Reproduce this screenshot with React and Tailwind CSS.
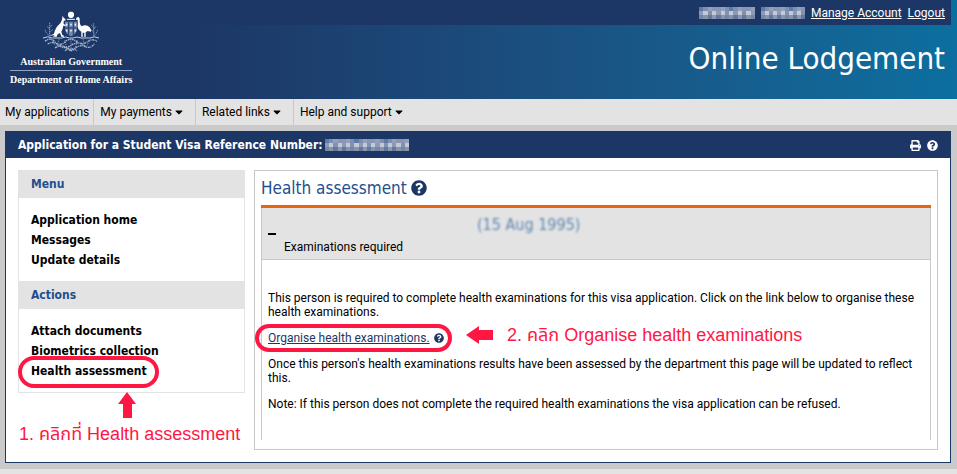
import { FaCaretDown, FaQuestionCircle, FaPrint } from 'react-icons/fa';

const navItems = [
  { label: 'My applications', caret: false },
  { label: 'My payments', caret: true },
  { label: 'Related links', caret: true },
  { label: 'Help and support', caret: true },
];

const sideGroups = [
  { title: 'Menu', items: ['Application home', 'Messages', 'Update details'] },
  { title: 'Actions', items: ['Attach documents', 'Biometrics collection', 'Health assessment'] },
];

// one list of shades per row, the middle row is the brightest
const shades = [
  ['#5f7aa4', '#7f8fb0', '#8a96b4', '#7485a6', '#94a0b8', '#8b93b3', '#a0a3b8'],
  ['#8fa3be', '#a9b4c6', '#8b9ab8', '#c3c9d6', '#9aa2bb', '#b5b0c2', '#7f93b1', '#9fb3bf'],
  ['#6b7da3', '#8a97b5', '#65799f', '#8f9bb5', '#7686a8', '#8795a6'],
];

function Mosaic({ cols, className }) {
  return (
    <svg viewBox={`0 0 ${cols} 3`} preserveAspectRatio="none" shapeRendering="crispEdges" className={className} aria-hidden="true">
      {shades.map((row, y) =>
        Array.from({ length: cols }, (_, x) => (
          <rect key={`${x}-${y}`} x={x} y={y} width="1" height="1" fill={row[(x * x + y * 2) % row.length]} />
        ))
      )}
    </svg>
  );
}

function Crest() {
  return (
    <svg viewBox="0 0 168 124" className="h-[42px] w-[56px]" fill="none" stroke="#fff" aria-hidden="true">
      <path d="M80 1h8l5 5v8l-5 6h-8l-5-6V6z" fill="#fff" stroke="none" />
      <path d="M72 24h24" strokeWidth="3" />
      <path d="M66 31h36v24q-3 14-18 20q-15-6-18-20z" fill="#7489b2" stroke="none" />
      <path d="M77 31v40M91 31v40M66 50h36" strokeWidth="3" stroke="#1c3766" />
      <path d="M69 40h4M82 40h4M95 40h4M69 58h4M82 58h4M95 58h4" strokeWidth="5" />
      <path d="M59 13l3 6 5 4 1 4-6 2 0 9 6 3-1 3-6-1-2 9-4 9 3 10 5 2v3h-8l-4-11-7 4-3 7H30l5-5-17 3 15-7q4-17 13-25q8-7 11-17z" fill="#fff" stroke="none" />
      <path d="M100 20q5-5 9-1q2 5 1 13q1 9 6 13q13-8 24 3q6 8 4 13l-10-2-6 4v14h-4V64h-5v13h-4V61q-11-6-11-17q1-11 0-19l-5 1z" fill="#fff" stroke="none" />
      <path d="M0 80q14-7 28 0h28q12-6 24 0h10q12-6 24 0h26q14-7 28 0" strokeWidth="3" stroke="#c7d0e2" />
      <path d="M20 34v40M152 36v40M20 74q-12-8-14-20M20 64l10-10M20 54l-8-10M20 48l8-8M152 74q10-8 12-20M152 64l-8-10M152 54l8-10M152 48l-8-8" strokeWidth="3" stroke="#8fa2c4" strokeDasharray="4 2" />
      <path d="M6 90q16-14 30 2t32-2q16-12 32 0t32 2q14-12 30-2M14 98q18-10 34 4t36 0 38 0 32-4M36 110q18-12 32-2t32 0 30 0M66 118q10-8 18 2q10-10 18-2" strokeWidth="4" stroke="#a9b7d1" strokeDasharray="6 2 3 2" />
      <path d="M26 84l10 18M48 84l-6 24M66 86l6 30M84 84v36M102 86l-6 30M120 84l6 24M142 84l-10 18" strokeWidth="3" stroke="#8fa2c4" strokeDasharray="3 3" />
    </svg>
  );
}

function Header() {
  return (
    <header className="flex h-[99px] bg-linear-to-r from-[#1c3766] from-20% to-[#0b6f9f] text-white">
      <div className="flex flex-col items-center pt-[11px] pl-[10px] font-['Liberation_Serif',serif] text-[10px] leading-4 font-bold whitespace-nowrap">
        <Crest />
        <div className="self-stretch border-b border-[#8fa5c8] pt-px text-center">Australian Government</div>
        <div className="pt-px">Department of Home Affairs</div>
      </div>
      <div className="flex flex-1 flex-col pr-[6px]">
        <div className="flex h-[25px] items-center justify-end gap-[6px] bg-[#1c3766] pr-[6px] text-[12px]">
          <Mosaic cols={13} className="h-3 w-[56px]" />
          <Mosaic cols={11} className="h-3 w-[44px]" />
          <a href="#account" className="underline">Manage Account</a>
          <a href="#logout" className="underline">Logout</a>
        </div>
        <h1 className="pt-[13px] pr-[6px] text-right font-['DejaVu_Sans_Condensed',sans-serif] text-[31px] leading-10 whitespace-nowrap">Online Lodgement</h1>
      </div>
    </header>
  );
}

function Sidebar() {
  return (
    <div className="w-[227px] shrink-0">
      <nav className="border-x border-b border-[#e3e3e3] font-['DejaVu_Sans_Condensed',sans-serif] text-[12px] leading-5 font-bold">
        {sideGroups.map((group) => (
          <section key={group.title}>
            <h2 className="bg-[#e3e3e3] px-3 py-1 text-[#1f4f8f]">{group.title}</h2>
            <ul className="px-3 pt-3 pb-[11px]">
              {group.items.map((item) => (
                <li key={item} className="relative">
                  <a href="#page">{item}</a>
                  {item === 'Health assessment' && (
                    <span className="absolute -top-[5px] -left-[13px] h-8 w-[141px] rounded-full border-4 border-[#ff1744]" />
                  )}
                </li>
              ))}
            </ul>
          </section>
        ))}
      </nav>
      <div className="text-[#ff1744]">
        <svg viewBox="0 0 18 26" className="-mt-px ml-[100px] h-[26px] w-[18px]" fill="currentColor" aria-hidden="true">
          <path d="M9 0l9 12h-4v14H5V12H0z" />
        </svg>
        <p className="pl-px font-['Liberation_Sans','Noto_Sans_Thai',sans-serif] text-[18px] leading-8 whitespace-nowrap">1. คลิกที่ Health assessment</p>
      </div>
    </div>
  );
}

function Assessment() {
  return (
    <main className="min-w-0 flex-1 border border-[#c9c9c9] px-[6px] pt-1 pb-[9px]">
      <h2 className="flex items-center gap-1 pb-1 font-['DejaVu_Sans_Condensed',sans-serif] text-[17px] leading-[26px] text-[#1f4f8f]">
        Health assessment
        <button type="button" aria-label="Help"><FaQuestionCircle className="size-4 text-[#1c3766]" /></button>
      </h2>
      <div className="border-t-3 border-[#e8650f]">
        <div className="border-x border-[#c9c9c9]">
          <div className="flex h-[52px] items-end border-b border-[#c9c9c9] bg-[#e3e3e3] px-[6px] pb-1">
            <button type="button" aria-label="Collapse" className="mb-5 h-[2px] w-2 bg-black" />
            <div className="flex flex-1 flex-col pl-2 text-[12px] leading-4">
              <span className="mb-1 pl-[193px] font-['DejaVu_Sans_Condensed',sans-serif] text-[16px] leading-5 text-[#5f87b3] blur-[1px]">(15 Aug 1995)</span>
              <span>Examinations required</span>
            </div>
          </div>
          <div className="h-[180px] pt-[31px] pr-3 pl-[6px] text-[12px] leading-[14px]">
            <p>This person is required to complete health examinations for this visa application. Click on the link below to organise these health examinations.</p>
            <div className="relative my-3 flex h-[14px] items-center gap-1">
              <a href="#organise" className="text-[#1c3766] underline">Organise health examinations.</a>
              <button type="button" aria-label="Help"><FaQuestionCircle className="size-[10px] text-[#1c3766]" /></button>
              <span className="absolute -top-[7px] -left-[13px] h-7 w-[197px] rounded-full border-4 border-[#ff1744]" />
              <div className="absolute -top-[10px] left-[198px] flex items-center gap-[14px] text-[#ff1744]">
                <svg viewBox="0 0 27 18" className="h-[18px] w-[27px]" fill="currentColor" aria-hidden="true">
                  <path d="M0 9l13-9v4h14v10H13v4z" />
                </svg>
                <p className="font-['Liberation_Sans','Noto_Sans_Thai',sans-serif] text-[18px] leading-7 whitespace-nowrap">2. คลิก Organise health examinations</p>
              </div>
            </div>
            <p>Once this person's health examinations results have been assessed by the department this page will be updated to reflect this.</p>
            <p className="mt-3">Note: If this person does not complete the required health examinations the visa application can be refused.</p>
          </div>
        </div>
      </div>
    </main>
  );
}

export default function App() {
  return (
    <div className="min-h-screen bg-[#e3e3e3] font-['Roboto',sans-serif] text-black">
      <Header />
      <nav className="flex h-[26px] text-[12px]">
        {navItems.map((item) => (
          <button key={item.label} type="button" className="flex items-center gap-[3px] border-r border-[#c9c9c9] pr-3 pl-[6px] first:pr-1 first:pl-[5px] last:border-r-0">
            {item.label}
            {item.caret && <FaCaretDown className="h-3 w-2" />}
          </button>
        ))}
      </nav>
      <div className="bg-[#cacaca] py-[6px] pr-[6px] pl-[5px]">
        <div className="border border-[#1c3766] bg-white">
          <div className="flex h-[26px] items-center bg-[#1c3766] px-3 font-['DejaVu_Sans_Condensed',sans-serif] text-[12px] font-bold text-white">
            <h2>Application for a Student Visa Reference Number:</h2>
            <Mosaic cols={20} className="ml-[2px] h-3 w-[84px]" />
            <div className="ml-auto flex gap-[6px]">
              <button type="button" aria-label="Print"><FaPrint className="size-[11px]" /></button>
              <button type="button" aria-label="Help"><FaQuestionCircle className="size-[11px]" /></button>
            </div>
          </div>
          <div className="flex gap-[9px] p-3">
            <Sidebar />
            <Assessment />
          </div>
        </div>
      </div>
    </div>
  );
}
